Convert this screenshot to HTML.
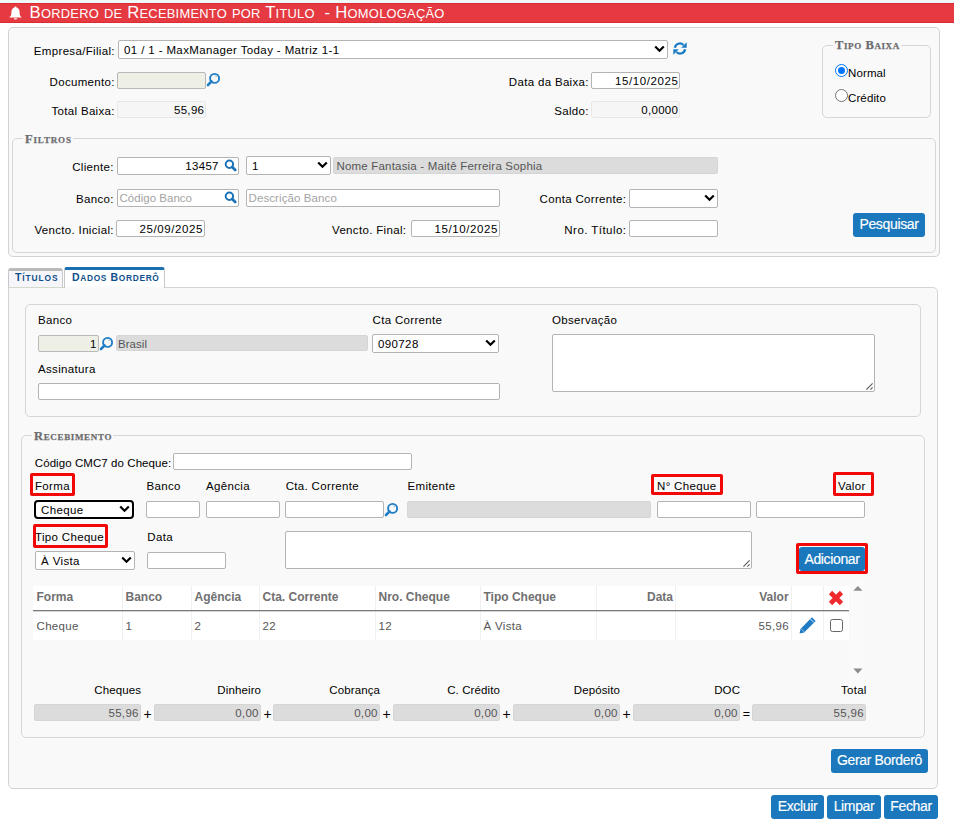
<!DOCTYPE html><html><head><meta charset="utf-8"><style>
html,body{margin:0;padding:0;width:954px;height:826px;overflow:hidden;background:#fff;position:relative;font-family:"Liberation Sans", sans-serif;}
div{box-sizing:border-box;}
.t{position:absolute;white-space:pre;font-family:"Liberation Sans", sans-serif;}
.p{position:absolute;}
.inp{position:absolute;background:#fff;border:1px solid #b4b4b4;border-radius:2px;}
.ro{position:absolute;background:#f6f6f6;border:1px solid #e8e8e8;border-radius:2px;}
.gr{position:absolute;background:#eef0e6;border:1px solid #b9b9b9;border-radius:2px;}
.gray{position:absolute;background:#dcdcdc;border:1px solid #d5d5d5;border-radius:2px;}
.sel{position:absolute;background:#fff;border:1px solid #b4b4b4;border-radius:2px;}
.sel .st{position:absolute;left:5px;top:0;bottom:0;display:flex;align-items:center;font-size:11.5px;letter-spacing:0.38px;color:#000;white-space:pre;}
.sel .chev{position:absolute;right:2.5px;top:50%;margin-top:-4.4px;height:8px;line-height:0;}
.panel{position:absolute;background:#f9f9f9;border:1px solid #d2d2d2;border-radius:5px;}
.fs{position:absolute;border:1px solid #d6d6d6;border-radius:5px;}
.leg{position:absolute;font-family:"Liberation Serif",serif;font-weight:700;font-variant:small-caps;color:#6c6c6e;background:#f9f9f9;padding:0 1px 0 2px;-webkit-text-stroke:0.25px #6c6c6e;white-space:pre;line-height:14px;}
.btn{position:absolute;background:#1b78bd;border-radius:3px;color:#fff;font-size:14px;letter-spacing:-0.35px;padding-bottom:2px;-webkit-text-stroke:0.15px #fff;display:flex;align-items:center;justify-content:center;white-space:pre;}
.red{position:absolute;border:3px solid #f30808;border-radius:2px;}
.ic{position:absolute;line-height:0;}
</style></head><body>
<div class="p" style="left:0px;top:0px;width:954px;height:3px;background:#eef8f9;"></div>
<div class="p" style="left:0px;top:3px;width:954px;height:20px;background:#e63a42;border-top:1px solid #de2a33;border-bottom:1px solid #de2a33;"></div>
<div class="ic" style="left:9px;top:6px;"><svg width="13" height="14" viewBox="0 0 13 14"><path d="M6.5 0.6 C7.2 0.6 7.5 1.1 7.5 1.6 C9.6 2.1 10.6 3.9 10.6 6.2 C10.6 9 11.3 10.2 12.5 11.1 L12.5 11.6 L0.5 11.6 L0.5 11.1 C1.7 10.2 2.4 9 2.4 6.2 C2.4 3.9 3.4 2.1 5.5 1.6 C5.5 1.1 5.8 0.6 6.5 0.6 Z M4.8 12.2 L8.2 12.2 C8.1 13.1 7.4 13.6 6.5 13.6 C5.6 13.6 4.9 13.1 4.8 12.2 Z" fill="#fff"/></svg></div>
<div class="t" style="left:29.5px;top:2px;line-height:22px;color:#fff;"><span style="font-size:16.7px;letter-spacing:0.25px">B</span><span style="font-size:12.9px;letter-spacing:0.25px">ORDERO</span><span style="font-size:16.7px;letter-spacing:0.25px"> </span><span style="font-size:12.9px;letter-spacing:0.25px">DE</span><span style="font-size:16.7px;letter-spacing:0.25px"> R</span><span style="font-size:12.9px;letter-spacing:0.25px">ECEBIMENTO</span><span style="font-size:16.7px;letter-spacing:0.25px"> </span><span style="font-size:12.9px;letter-spacing:0.25px">POR</span><span style="font-size:16.7px;letter-spacing:0.25px"> T</span><span style="font-size:12.9px;letter-spacing:0.25px">ITULO</span><span style="font-size:16.7px;letter-spacing:0.25px">  - H</span><span style="font-size:12.9px;letter-spacing:0.25px">OMOLOGAÇÃO</span></div>
<div class="panel" style="left:8px;top:27px;width:932px;height:230px;"></div>
<div class="t" style="left:-285.17px;width:400px;text-align:right;top:41.20px;font-size:11.5px;line-height:20px;color:#000;font-weight:400;letter-spacing:0.33px;">Empresa/Filial:</div>
<div class="sel" style="left:118px;top:40px;width:550px;height:19px;"><span class="st">01 / 1 - MaxManager Today - Matriz 1-1</span><span class="chev"><svg width="11" height="8" viewBox="0 0 11 8"><path d="M1.2 1.5 L5.5 5.8 L9.8 1.5" fill="none" stroke="#000" stroke-width="2.2"/></svg></span></div>
<div class="ic" style="left:673px;top:42px;"><svg width="14" height="13" viewBox="0 0 14 13"><path d="M1.9 5.7 A5 5 0 0 1 10.4 3.0" fill="none" stroke="#1a7bc4" stroke-width="2.3"/><path d="M13.7 0.3 L13.7 5.8 L8.2 5.8 Z" fill="#1a7bc4"/><path d="M12.1 7.3 A5 5 0 0 1 3.6 10.0" fill="none" stroke="#1a7bc4" stroke-width="2.3"/><path d="M0.3 12.7 L0.3 7.2 L5.8 7.2 Z" fill="#1a7bc4"/></svg></div>
<div class="t" style="left:-285.17px;width:400px;text-align:right;top:71.80px;font-size:11.5px;line-height:20px;color:#000;font-weight:400;letter-spacing:0.33px;">Documento:</div>
<div class="gr" style="left:117px;top:72px;width:89px;height:17px;"></div>
<div class="ic" style="left:206px;top:72px;"><svg width="15" height="15" viewBox="0 0 15 15"><circle cx="8.6" cy="6.4" r="4.5" fill="none" stroke="#1f7dc3" stroke-width="1.9"/><path d="M5.6 9.4 L2 13" stroke="#1f7dc3" stroke-width="2.6" stroke-linecap="round"/><path d="M9.2 3.6 L10.6 5" stroke="#6aa9da" stroke-width="1"/></svg></div>
<div class="t" style="left:-285.17px;width:400px;text-align:right;top:100.80px;font-size:11.5px;line-height:20px;color:#000;font-weight:400;letter-spacing:0.33px;">Total Baixa:</div>
<div class="ro" style="left:117px;top:101px;width:89px;height:17px;"></div>
<div class="t" style="left:-195.67px;width:400px;text-align:right;top:99.80px;font-size:11.5px;line-height:20px;color:#000;font-weight:400;letter-spacing:0.33px;">55,96</div>
<div class="t" style="left:188.83px;width:400px;text-align:right;top:71.80px;font-size:11.5px;line-height:20px;color:#000;font-weight:400;letter-spacing:0.33px;">Data da Baixa:</div>
<div class="inp" style="left:591px;top:72px;width:89px;height:17px;"></div>
<div class="t" style="left:278.60px;width:400px;text-align:right;top:70.80px;font-size:11.5px;line-height:20px;color:#000;font-weight:400;letter-spacing:0.6px;">15/10/2025</div>
<div class="t" style="left:188.83px;width:400px;text-align:right;top:100.80px;font-size:11.5px;line-height:20px;color:#000;font-weight:400;letter-spacing:0.33px;">Saldo:</div>
<div class="ro" style="left:591px;top:101px;width:89px;height:17px;"></div>
<div class="t" style="left:278.33px;width:400px;text-align:right;top:99.80px;font-size:11.5px;line-height:20px;color:#000;font-weight:400;letter-spacing:0.33px;">0,0000</div>
<div class="fs" style="left:822px;top:45px;width:109px;height:73px;"></div>
<div class="leg" style="left:833px;top:37px;"><span style="font-size:12.5px;letter-spacing:0.6px">T</span><span style="font-size:9px;letter-spacing:0.6px">IPO</span><span style="font-size:12.5px;letter-spacing:0.6px"> B</span><span style="font-size:9px;letter-spacing:0.6px">AIXA</span></div>
<div class="p" style="left:835px;top:64px;width:13px;height:13px;border-radius:50%;background:#fff;border:1px solid #0075ff;box-shadow:inset 0 0 0 2px #fff;"><div style="position:absolute;left:2px;top:2px;width:7px;height:7px;border-radius:50%;background:#0075ff;"></div></div>
<div class="t" style="left:848px;top:63.20px;font-size:11.5px;line-height:20px;color:#000;font-weight:400;letter-spacing:0.12px;">Normal</div>
<div class="p" style="left:835px;top:89px;width:13px;height:13px;border-radius:50%;background:#fff;border:1px solid #767676;"></div>
<div class="t" style="left:848px;top:88.20px;font-size:11.5px;line-height:20px;color:#000;font-weight:400;letter-spacing:0.12px;">Crédito</div>
<div class="fs" style="left:12px;top:138px;width:924px;height:115px;"></div>
<div class="leg" style="left:23px;top:131px;"><span style="font-size:12.5px;letter-spacing:0.85px">F</span><span style="font-size:9px;letter-spacing:0.85px">ILTROS</span></div>
<div class="t" style="left:-286.17px;width:400px;text-align:right;top:157.20px;font-size:11.5px;line-height:20px;color:#000;font-weight:400;letter-spacing:0.33px;">Cliente:</div>
<div class="inp" style="left:117px;top:157px;width:122px;height:18px;"></div>
<div class="t" style="left:-181.17px;width:400px;text-align:right;top:156.20px;font-size:11.5px;line-height:20px;color:#000;font-weight:400;letter-spacing:0.33px;">13457</div>
<div class="ic" style="left:224px;top:159px;"><svg width="14" height="14" viewBox="0 0 14 14"><circle cx="5.4" cy="5.2" r="3.7" fill="none" stroke="#1a73b8" stroke-width="2"/><path d="M8.2 8 L11.2 11" stroke="#1a73b8" stroke-width="2.8" stroke-linecap="round"/></svg></div>
<div class="sel" style="left:246px;top:156px;width:85px;height:19px;"><span class="st">1</span><span class="chev"><svg width="11" height="8" viewBox="0 0 11 8"><path d="M1.2 1.5 L5.5 5.8 L9.8 1.5" fill="none" stroke="#000" stroke-width="2.2"/></svg></span></div>
<div class="gray" style="left:333px;top:157px;width:385px;height:17px;"></div>
<div class="t" style="left:336.5px;top:156.20px;font-size:11.5px;line-height:20px;color:#555;font-weight:400;letter-spacing:0.19px;">Nome Fantasia - Maitê Ferreira Sophia</div>
<div class="t" style="left:-286.17px;width:400px;text-align:right;top:189.20px;font-size:11.5px;line-height:20px;color:#000;font-weight:400;letter-spacing:0.33px;">Banco:</div>
<div class="inp" style="left:117px;top:189px;width:122px;height:18px;"></div>
<div class="t" style="left:119.5px;top:188.20px;font-size:11.5px;line-height:20px;color:#a3a3a3;font-weight:400;letter-spacing:0.02px;">Código Banco</div>
<div class="ic" style="left:224px;top:191px;"><svg width="14" height="14" viewBox="0 0 14 14"><circle cx="5.4" cy="5.2" r="3.7" fill="none" stroke="#1a73b8" stroke-width="2"/><path d="M8.2 8 L11.2 11" stroke="#1a73b8" stroke-width="2.8" stroke-linecap="round"/></svg></div>
<div class="inp" style="left:246px;top:189px;width:254px;height:18px;"></div>
<div class="t" style="left:248.5px;top:188.20px;font-size:11.5px;line-height:20px;color:#a3a3a3;font-weight:400;letter-spacing:0.1px;">Descrição Banco</div>
<div class="t" style="left:226.33px;width:400px;text-align:right;top:189.20px;font-size:11.5px;line-height:20px;color:#000;font-weight:400;letter-spacing:0.33px;">Conta Corrente:</div>
<div class="sel" style="left:629px;top:189px;width:89px;height:19px;"><span class="st"></span><span class="chev"><svg width="11" height="8" viewBox="0 0 11 8"><path d="M1.2 1.5 L5.5 5.8 L9.8 1.5" fill="none" stroke="#000" stroke-width="2.2"/></svg></span></div>
<div class="t" style="left:-286.17px;width:400px;text-align:right;top:220.20px;font-size:11.5px;line-height:20px;color:#000;font-weight:400;letter-spacing:0.33px;">Vencto. Inicial:</div>
<div class="inp" style="left:116px;top:220px;width:89px;height:17px;"></div>
<div class="t" style="left:-196.90px;width:400px;text-align:right;top:219.20px;font-size:11.5px;line-height:20px;color:#000;font-weight:400;letter-spacing:0.6px;">25/09/2025</div>
<div class="t" style="left:6.33px;width:400px;text-align:right;top:220.20px;font-size:11.5px;line-height:20px;color:#000;font-weight:400;letter-spacing:0.33px;">Vencto. Final:</div>
<div class="inp" style="left:411px;top:220px;width:89px;height:17px;"></div>
<div class="t" style="left:98.10px;width:400px;text-align:right;top:219.20px;font-size:11.5px;line-height:20px;color:#000;font-weight:400;letter-spacing:0.6px;">15/10/2025</div>
<div class="t" style="left:226.45px;width:400px;text-align:right;top:220.20px;font-size:11.5px;line-height:20px;color:#000;font-weight:400;letter-spacing:0.45px;">Nro. Título:</div>
<div class="inp" style="left:629px;top:220px;width:89px;height:17px;"></div>
<div class="btn" style="left:853px;top:213px;width:72px;height:24px;">Pesquisar</div>
<div class="panel" style="left:8px;top:287px;width:930px;height:502px;border-radius:0 5px 5px 5px;border-color:#d3d6d0;"></div>
<div class="p" style="left:8px;top:268px;width:55px;height:20px;background:#f6f6fa;border:1px solid #c8c8c8;border-bottom-color:#d2dacb;border-top:3px solid #bababa;border-radius:3px 3px 0 0;"></div>
<div class="t" style="left:15px;top:269px;line-height:14px;font-weight:700;color:#0f4f8c;"><span style="font-size:10.5px;letter-spacing:0.9px">T</span><span style="font-size:8.4px;letter-spacing:0.9px">ÍTULOS</span></div>
<div class="p" style="left:64px;top:267px;width:101px;height:21px;background:linear-gradient(#fff 85%,#f9f9f9);border:1px solid #c8c8c8;border-bottom:none;border-top:3px solid #1a6fb0;border-radius:3px 3px 0 0;"></div>
<div class="t" style="left:72px;top:269px;line-height:14px;font-weight:700;color:#0f4f8c;"><span style="font-size:10.5px;letter-spacing:0.65px">D</span><span style="font-size:8.4px;letter-spacing:0.65px">ADOS</span><span style="font-size:10.5px;letter-spacing:0.65px"> B</span><span style="font-size:8.4px;letter-spacing:0.65px">ORDERÔ</span></div>
<div class="fs" style="left:25px;top:304px;width:896px;height:113px;"></div>
<div class="t" style="left:38px;top:310.40px;font-size:11.5px;line-height:20px;color:#000;font-weight:400;letter-spacing:0.33px;">Banco</div>
<div class="gr" style="left:38px;top:335px;width:61px;height:17px;"></div>
<div class="t" style="left:-303.17px;width:400px;text-align:right;top:333.70px;font-size:11.5px;line-height:20px;color:#000;font-weight:400;letter-spacing:0.33px;">1</div>
<div class="ic" style="left:99px;top:336px;"><svg width="15" height="15" viewBox="0 0 15 15"><circle cx="8.6" cy="6.4" r="4.5" fill="none" stroke="#1f7dc3" stroke-width="1.9"/><path d="M5.6 9.4 L2 13" stroke="#1f7dc3" stroke-width="2.6" stroke-linecap="round"/><path d="M9.2 3.6 L10.6 5" stroke="#6aa9da" stroke-width="1"/></svg></div>
<div class="gray" style="left:116px;top:335px;width:252px;height:16px;"></div>
<div class="t" style="left:118px;top:333.70px;font-size:11.5px;line-height:20px;color:#555;font-weight:400;letter-spacing:0.05px;">Brasil</div>
<div class="t" style="left:372.5px;top:310.40px;font-size:11.5px;line-height:20px;color:#000;font-weight:400;letter-spacing:0.33px;">Cta Corrente</div>
<div class="sel" style="left:372px;top:334px;width:127px;height:19px;"><span class="st">090728</span><span class="chev"><svg width="11" height="8" viewBox="0 0 11 8"><path d="M1.2 1.5 L5.5 5.8 L9.8 1.5" fill="none" stroke="#000" stroke-width="2.2"/></svg></span></div>
<div class="t" style="left:552px;top:310.40px;font-size:11.5px;line-height:20px;color:#000;font-weight:400;letter-spacing:0.33px;">Observação</div>
<div class="inp" style="left:552px;top:334px;width:323px;height:58px;"></div>
<div class="ic" style="left:865px;top:382px;"><svg width="10" height="10" viewBox="0 0 10 10"><path d="M1.4 7.6 L7.6 1.4 M5.4 7.6 L7.6 5.4" stroke="#5a5a5a" stroke-width="1.1"/></svg></div>
<div class="t" style="left:38px;top:359.40px;font-size:11.5px;line-height:20px;color:#000;font-weight:400;letter-spacing:0.33px;">Assinatura</div>
<div class="inp" style="left:38px;top:383px;width:462px;height:17px;"></div>
<div class="fs" style="left:21px;top:435px;width:904px;height:303px;"></div>
<div class="leg" style="left:32px;top:428px;"><span style="font-size:12.5px;letter-spacing:0.65px">R</span><span style="font-size:9px;letter-spacing:0.65px">ECEBIMENTO</span></div>
<div class="t" style="left:34.8px;top:453.20px;font-size:11.5px;line-height:20px;color:#000;font-weight:400;letter-spacing:0.07px;">Código CMC7 do Cheque:</div>
<div class="inp" style="left:173px;top:453px;width:239px;height:17px;"></div>
<div class="t" style="left:35px;top:476.00px;font-size:11.5px;line-height:20px;color:#000;font-weight:400;letter-spacing:0.33px;">Forma</div>
<div class="t" style="left:146.5px;top:476.00px;font-size:11.5px;line-height:20px;color:#000;font-weight:400;letter-spacing:0.33px;">Banco</div>
<div class="t" style="left:206px;top:476.00px;font-size:11.5px;line-height:20px;color:#000;font-weight:400;letter-spacing:0.33px;">Agência</div>
<div class="t" style="left:285.7px;top:476.00px;font-size:11.5px;line-height:20px;color:#000;font-weight:400;letter-spacing:0.33px;">Cta. Corrente</div>
<div class="t" style="left:407.5px;top:476.00px;font-size:11.5px;line-height:20px;color:#000;font-weight:400;letter-spacing:0.33px;">Emitente</div>
<div class="t" style="left:657px;top:476.00px;font-size:11.5px;line-height:20px;color:#000;font-weight:400;letter-spacing:0.33px;">N° Cheque</div>
<div class="t" style="left:838px;top:476.00px;font-size:11.5px;line-height:20px;color:#000;font-weight:400;letter-spacing:0.33px;">Valor</div>
<div class="red" style="left:30px;top:473px;width:45px;height:23px;"></div>
<div class="red" style="left:651px;top:474px;width:72px;height:21px;"></div>
<div class="red" style="left:833px;top:472px;width:41px;height:24px;"></div>
<div class="sel" style="left:34px;top:500px;width:100px;height:19px;border:2px solid #000;border-radius:4px;box-shadow:0 0 0 1px #fff;"><span class="st">Cheque</span><span class="chev"><svg width="11" height="8" viewBox="0 0 11 8"><path d="M1.2 1.5 L5.5 5.8 L9.8 1.5" fill="none" stroke="#000" stroke-width="2.2"/></svg></span></div>
<div class="inp" style="left:146px;top:501px;width:54px;height:17px;"></div>
<div class="inp" style="left:206px;top:501px;width:74px;height:17px;"></div>
<div class="inp" style="left:285px;top:501px;width:99px;height:17px;"></div>
<div class="ic" style="left:384px;top:502px;"><svg width="15" height="15" viewBox="0 0 15 15"><circle cx="8.6" cy="6.4" r="4.5" fill="none" stroke="#1f7dc3" stroke-width="1.9"/><path d="M5.6 9.4 L2 13" stroke="#1f7dc3" stroke-width="2.6" stroke-linecap="round"/><path d="M9.2 3.6 L10.6 5" stroke="#6aa9da" stroke-width="1"/></svg></div>
<div class="gray" style="left:407px;top:501px;width:244px;height:17px;"></div>
<div class="inp" style="left:657px;top:501px;width:94px;height:17px;"></div>
<div class="inp" style="left:756px;top:501px;width:109px;height:17px;"></div>
<div class="red" style="left:33px;top:524px;width:75px;height:24px;"></div>
<div class="t" style="left:35px;top:527.20px;font-size:11.5px;line-height:20px;color:#000;font-weight:400;letter-spacing:0.33px;">Tipo Cheque</div>
<div class="t" style="left:147.3px;top:527.20px;font-size:11.5px;line-height:20px;color:#000;font-weight:400;letter-spacing:0.33px;">Data</div>
<div class="sel" style="left:35px;top:551px;width:100px;height:19px;"><span class="st">À Vista</span><span class="chev"><svg width="11" height="8" viewBox="0 0 11 8"><path d="M1.2 1.5 L5.5 5.8 L9.8 1.5" fill="none" stroke="#000" stroke-width="2.2"/></svg></span></div>
<div class="inp" style="left:147px;top:552px;width:79px;height:17px;"></div>
<div class="inp" style="left:285px;top:531px;width:467px;height:38px;"></div>
<div class="ic" style="left:742px;top:559px;"><svg width="10" height="10" viewBox="0 0 10 10"><path d="M1.4 7.6 L7.6 1.4 M5.4 7.6 L7.6 5.4" stroke="#5a5a5a" stroke-width="1.1"/></svg></div>
<div class="red" style="left:796px;top:543px;width:72px;height:31px;"></div>
<div class="btn" style="left:799px;top:547px;width:66px;height:24px;padding-bottom:0;">Adicionar</div>
<div class="p" style="left:33px;top:586px;width:816px;height:54px;background:#fff;"></div>
<div class="p" style="left:33px;top:610px;width:816px;height:1px;background:#7a7a7a;"></div>
<div class="p" style="left:33px;top:611px;width:816px;height:1px;background:#d4d4d4;"></div>
<div class="p" style="left:122px;top:586px;width:1px;height:24px;background:#f0f0f0;"></div>
<div class="p" style="left:122px;top:612px;width:1px;height:28px;background:#f0f0f0;"></div>
<div class="p" style="left:191px;top:586px;width:1px;height:24px;background:#f0f0f0;"></div>
<div class="p" style="left:191px;top:612px;width:1px;height:28px;background:#f0f0f0;"></div>
<div class="p" style="left:259px;top:586px;width:1px;height:24px;background:#f0f0f0;"></div>
<div class="p" style="left:259px;top:612px;width:1px;height:28px;background:#f0f0f0;"></div>
<div class="p" style="left:375px;top:586px;width:1px;height:24px;background:#f0f0f0;"></div>
<div class="p" style="left:375px;top:612px;width:1px;height:28px;background:#f0f0f0;"></div>
<div class="p" style="left:480px;top:586px;width:1px;height:24px;background:#f0f0f0;"></div>
<div class="p" style="left:480px;top:612px;width:1px;height:28px;background:#f0f0f0;"></div>
<div class="p" style="left:596px;top:586px;width:1px;height:24px;background:#f0f0f0;"></div>
<div class="p" style="left:596px;top:612px;width:1px;height:28px;background:#f0f0f0;"></div>
<div class="p" style="left:675px;top:586px;width:1px;height:24px;background:#f0f0f0;"></div>
<div class="p" style="left:675px;top:612px;width:1px;height:28px;background:#f0f0f0;"></div>
<div class="p" style="left:791px;top:586px;width:1px;height:24px;background:#f0f0f0;"></div>
<div class="p" style="left:791px;top:612px;width:1px;height:28px;background:#f0f0f0;"></div>
<div class="p" style="left:823px;top:586px;width:1px;height:24px;background:#f0f0f0;"></div>
<div class="p" style="left:823px;top:612px;width:1px;height:28px;background:#f0f0f0;"></div>
<div class="t" style="left:36.5px;top:587.43px;font-size:12px;line-height:20px;color:#707070;font-weight:700;letter-spacing:0px;">Forma</div>
<div class="t" style="left:125.5px;top:587.43px;font-size:12px;line-height:20px;color:#707070;font-weight:700;letter-spacing:0px;">Banco</div>
<div class="t" style="left:194.5px;top:587.43px;font-size:12px;line-height:20px;color:#707070;font-weight:700;letter-spacing:0px;">Agência</div>
<div class="t" style="left:262.5px;top:587.43px;font-size:12px;line-height:20px;color:#707070;font-weight:700;letter-spacing:0px;">Cta. Corrente</div>
<div class="t" style="left:378.5px;top:587.43px;font-size:12px;line-height:20px;color:#707070;font-weight:700;letter-spacing:0px;">Nro. Cheque</div>
<div class="t" style="left:483.5px;top:587.43px;font-size:12px;line-height:20px;color:#707070;font-weight:700;letter-spacing:0px;">Tipo Cheque</div>
<div class="t" style="left:273.00px;width:400px;text-align:right;top:587.43px;font-size:12px;line-height:20px;color:#707070;font-weight:700;letter-spacing:0px;">Data</div>
<div class="t" style="left:388.60px;width:400px;text-align:right;top:587.43px;font-size:12px;line-height:20px;color:#707070;font-weight:700;letter-spacing:0px;">Valor</div>
<div class="t" style="left:36.5px;top:615.70px;font-size:11.5px;line-height:20px;color:#555;font-weight:400;letter-spacing:0.33px;">Cheque</div>
<div class="t" style="left:125.5px;top:615.70px;font-size:11.5px;line-height:20px;color:#555;font-weight:400;letter-spacing:0.33px;">1</div>
<div class="t" style="left:194.5px;top:615.70px;font-size:11.5px;line-height:20px;color:#555;font-weight:400;letter-spacing:0.33px;">2</div>
<div class="t" style="left:262.5px;top:615.70px;font-size:11.5px;line-height:20px;color:#555;font-weight:400;letter-spacing:0.33px;">22</div>
<div class="t" style="left:378.5px;top:615.70px;font-size:11.5px;line-height:20px;color:#555;font-weight:400;letter-spacing:0.33px;">12</div>
<div class="t" style="left:483.5px;top:615.70px;font-size:11.5px;line-height:20px;color:#555;font-weight:400;letter-spacing:0.33px;">À Vista</div>
<div class="t" style="left:388.93px;width:400px;text-align:right;top:615.70px;font-size:11.5px;line-height:20px;color:#555;font-weight:400;letter-spacing:0.33px;">55,96</div>
<div class="ic" style="left:826px;top:588px;"><svg width="20" height="20" viewBox="0 0 20 20"><path d="M4.5 4.5 L15.5 15.5 M15.5 4.5 L4.5 15.5" stroke="#ee2a2f" stroke-width="4.6" stroke-linecap="butt" stroke-linejoin="round"/></svg></div>
<div class="ic" style="left:798px;top:617px;"><svg width="19" height="18" viewBox="0 0 19 18"><path d="M1.6 16.4 L2.43 11.89 L13.96 0.36 L17.64 4.04 L6.11 15.57 Z" fill="#1f7bc4"/><path d="M12.6 2.2 L15.8 5.4" stroke="#fff" stroke-width="0.9"/><path d="M3 11.6 L6.3 14.9" stroke="#fff" stroke-width="0.7" opacity="0.8"/></svg></div>
<div class="p" style="left:830px;top:619px;width:13px;height:13px;background:#fff;border:1.3px solid #666;border-radius:2.5px;"></div>
<div class="p" style="left:850px;top:580px;width:15px;height:100px;background:#fafafa;"></div>
<div class="ic" style="left:852.5px;top:585px;"><svg width="10" height="6" viewBox="0 0 10 6"><path d="M0.3 5.8 L4.9 0.9 L9.5 5.8 Z" fill="#8c8c8c"/></svg></div>
<div class="ic" style="left:852.5px;top:667.5px;"><svg width="10" height="6" viewBox="0 0 10 6"><path d="M0.3 0.4 L4.9 5.4 L9.5 0.4 Z" fill="#8c8c8c"/></svg></div>
<div class="t" style="left:-258.88px;width:400px;text-align:right;top:679.80px;font-size:11.5px;line-height:20px;color:#000;font-weight:400;letter-spacing:0.12px;">Cheques</div>
<div class="gray" style="left:34px;top:704px;width:107px;height:17px;"></div>
<div class="t" style="left:-261.17px;width:400px;text-align:right;top:702.70px;font-size:11.5px;line-height:20px;color:#555;font-weight:400;letter-spacing:0.33px;">55,96</div>
<div class="t" style="left:-52.5px;width:400px;text-align:center;top:704.37px;font-size:14px;line-height:20px;color:#000;font-weight:400;letter-spacing:0px;font-weight:400;">+</div>
<div class="t" style="left:-138.88px;width:400px;text-align:right;top:679.80px;font-size:11.5px;line-height:20px;color:#000;font-weight:400;letter-spacing:0.12px;">Dinheiro</div>
<div class="gray" style="left:154px;top:704px;width:107px;height:17px;"></div>
<div class="t" style="left:-141.17px;width:400px;text-align:right;top:702.70px;font-size:11.5px;line-height:20px;color:#555;font-weight:400;letter-spacing:0.33px;">0,00</div>
<div class="t" style="left:67.5px;width:400px;text-align:center;top:704.37px;font-size:14px;line-height:20px;color:#000;font-weight:400;letter-spacing:0px;font-weight:400;">+</div>
<div class="t" style="left:-19.88px;width:400px;text-align:right;top:679.80px;font-size:11.5px;line-height:20px;color:#000;font-weight:400;letter-spacing:0.12px;">Cobrança</div>
<div class="gray" style="left:273px;top:704px;width:107px;height:17px;"></div>
<div class="t" style="left:-22.17px;width:400px;text-align:right;top:702.70px;font-size:11.5px;line-height:20px;color:#555;font-weight:400;letter-spacing:0.33px;">0,00</div>
<div class="t" style="left:186.5px;width:400px;text-align:center;top:704.37px;font-size:14px;line-height:20px;color:#000;font-weight:400;letter-spacing:0px;font-weight:400;">+</div>
<div class="t" style="left:100.12px;width:400px;text-align:right;top:679.80px;font-size:11.5px;line-height:20px;color:#000;font-weight:400;letter-spacing:0.12px;">C. Crédito</div>
<div class="gray" style="left:393px;top:704px;width:107px;height:17px;"></div>
<div class="t" style="left:97.83px;width:400px;text-align:right;top:702.70px;font-size:11.5px;line-height:20px;color:#555;font-weight:400;letter-spacing:0.33px;">0,00</div>
<div class="t" style="left:306.5px;width:400px;text-align:center;top:704.37px;font-size:14px;line-height:20px;color:#000;font-weight:400;letter-spacing:0px;font-weight:400;">+</div>
<div class="t" style="left:220.12px;width:400px;text-align:right;top:679.80px;font-size:11.5px;line-height:20px;color:#000;font-weight:400;letter-spacing:0.12px;">Depósito</div>
<div class="gray" style="left:513px;top:704px;width:107px;height:17px;"></div>
<div class="t" style="left:217.83px;width:400px;text-align:right;top:702.70px;font-size:11.5px;line-height:20px;color:#555;font-weight:400;letter-spacing:0.33px;">0,00</div>
<div class="t" style="left:426.5px;width:400px;text-align:center;top:704.37px;font-size:14px;line-height:20px;color:#000;font-weight:400;letter-spacing:0px;font-weight:400;">+</div>
<div class="t" style="left:340.12px;width:400px;text-align:right;top:679.80px;font-size:11.5px;line-height:20px;color:#000;font-weight:400;letter-spacing:0.12px;">DOC</div>
<div class="gray" style="left:633px;top:704px;width:107px;height:17px;"></div>
<div class="t" style="left:337.83px;width:400px;text-align:right;top:702.70px;font-size:11.5px;line-height:20px;color:#555;font-weight:400;letter-spacing:0.33px;">0,00</div>
<div class="t" style="left:546.5px;width:400px;text-align:center;top:703.87px;font-size:12.5px;line-height:20px;color:#000;font-weight:400;letter-spacing:0px;font-weight:400;">=</div>
<div class="t" style="left:466.70px;width:400px;text-align:right;top:679.80px;font-size:11.5px;line-height:20px;color:#000;font-weight:400;letter-spacing:0.3px;">Total</div>
<div class="gray" style="left:752px;top:704px;width:114px;height:17px;"></div>
<div class="t" style="left:463.93px;width:400px;text-align:right;top:702.70px;font-size:11.5px;line-height:20px;color:#555;font-weight:400;letter-spacing:0.33px;">55,96</div>
<div class="btn" style="left:831px;top:749px;width:97px;height:24px;">Gerar Borderô</div>
<div class="btn" style="left:771px;top:795px;width:53px;height:24px;">Excluir</div>
<div class="btn" style="left:827px;top:795px;width:54px;height:24px;">Limpar</div>
<div class="btn" style="left:884px;top:795px;width:54px;height:24px;">Fechar</div>
</body></html>
